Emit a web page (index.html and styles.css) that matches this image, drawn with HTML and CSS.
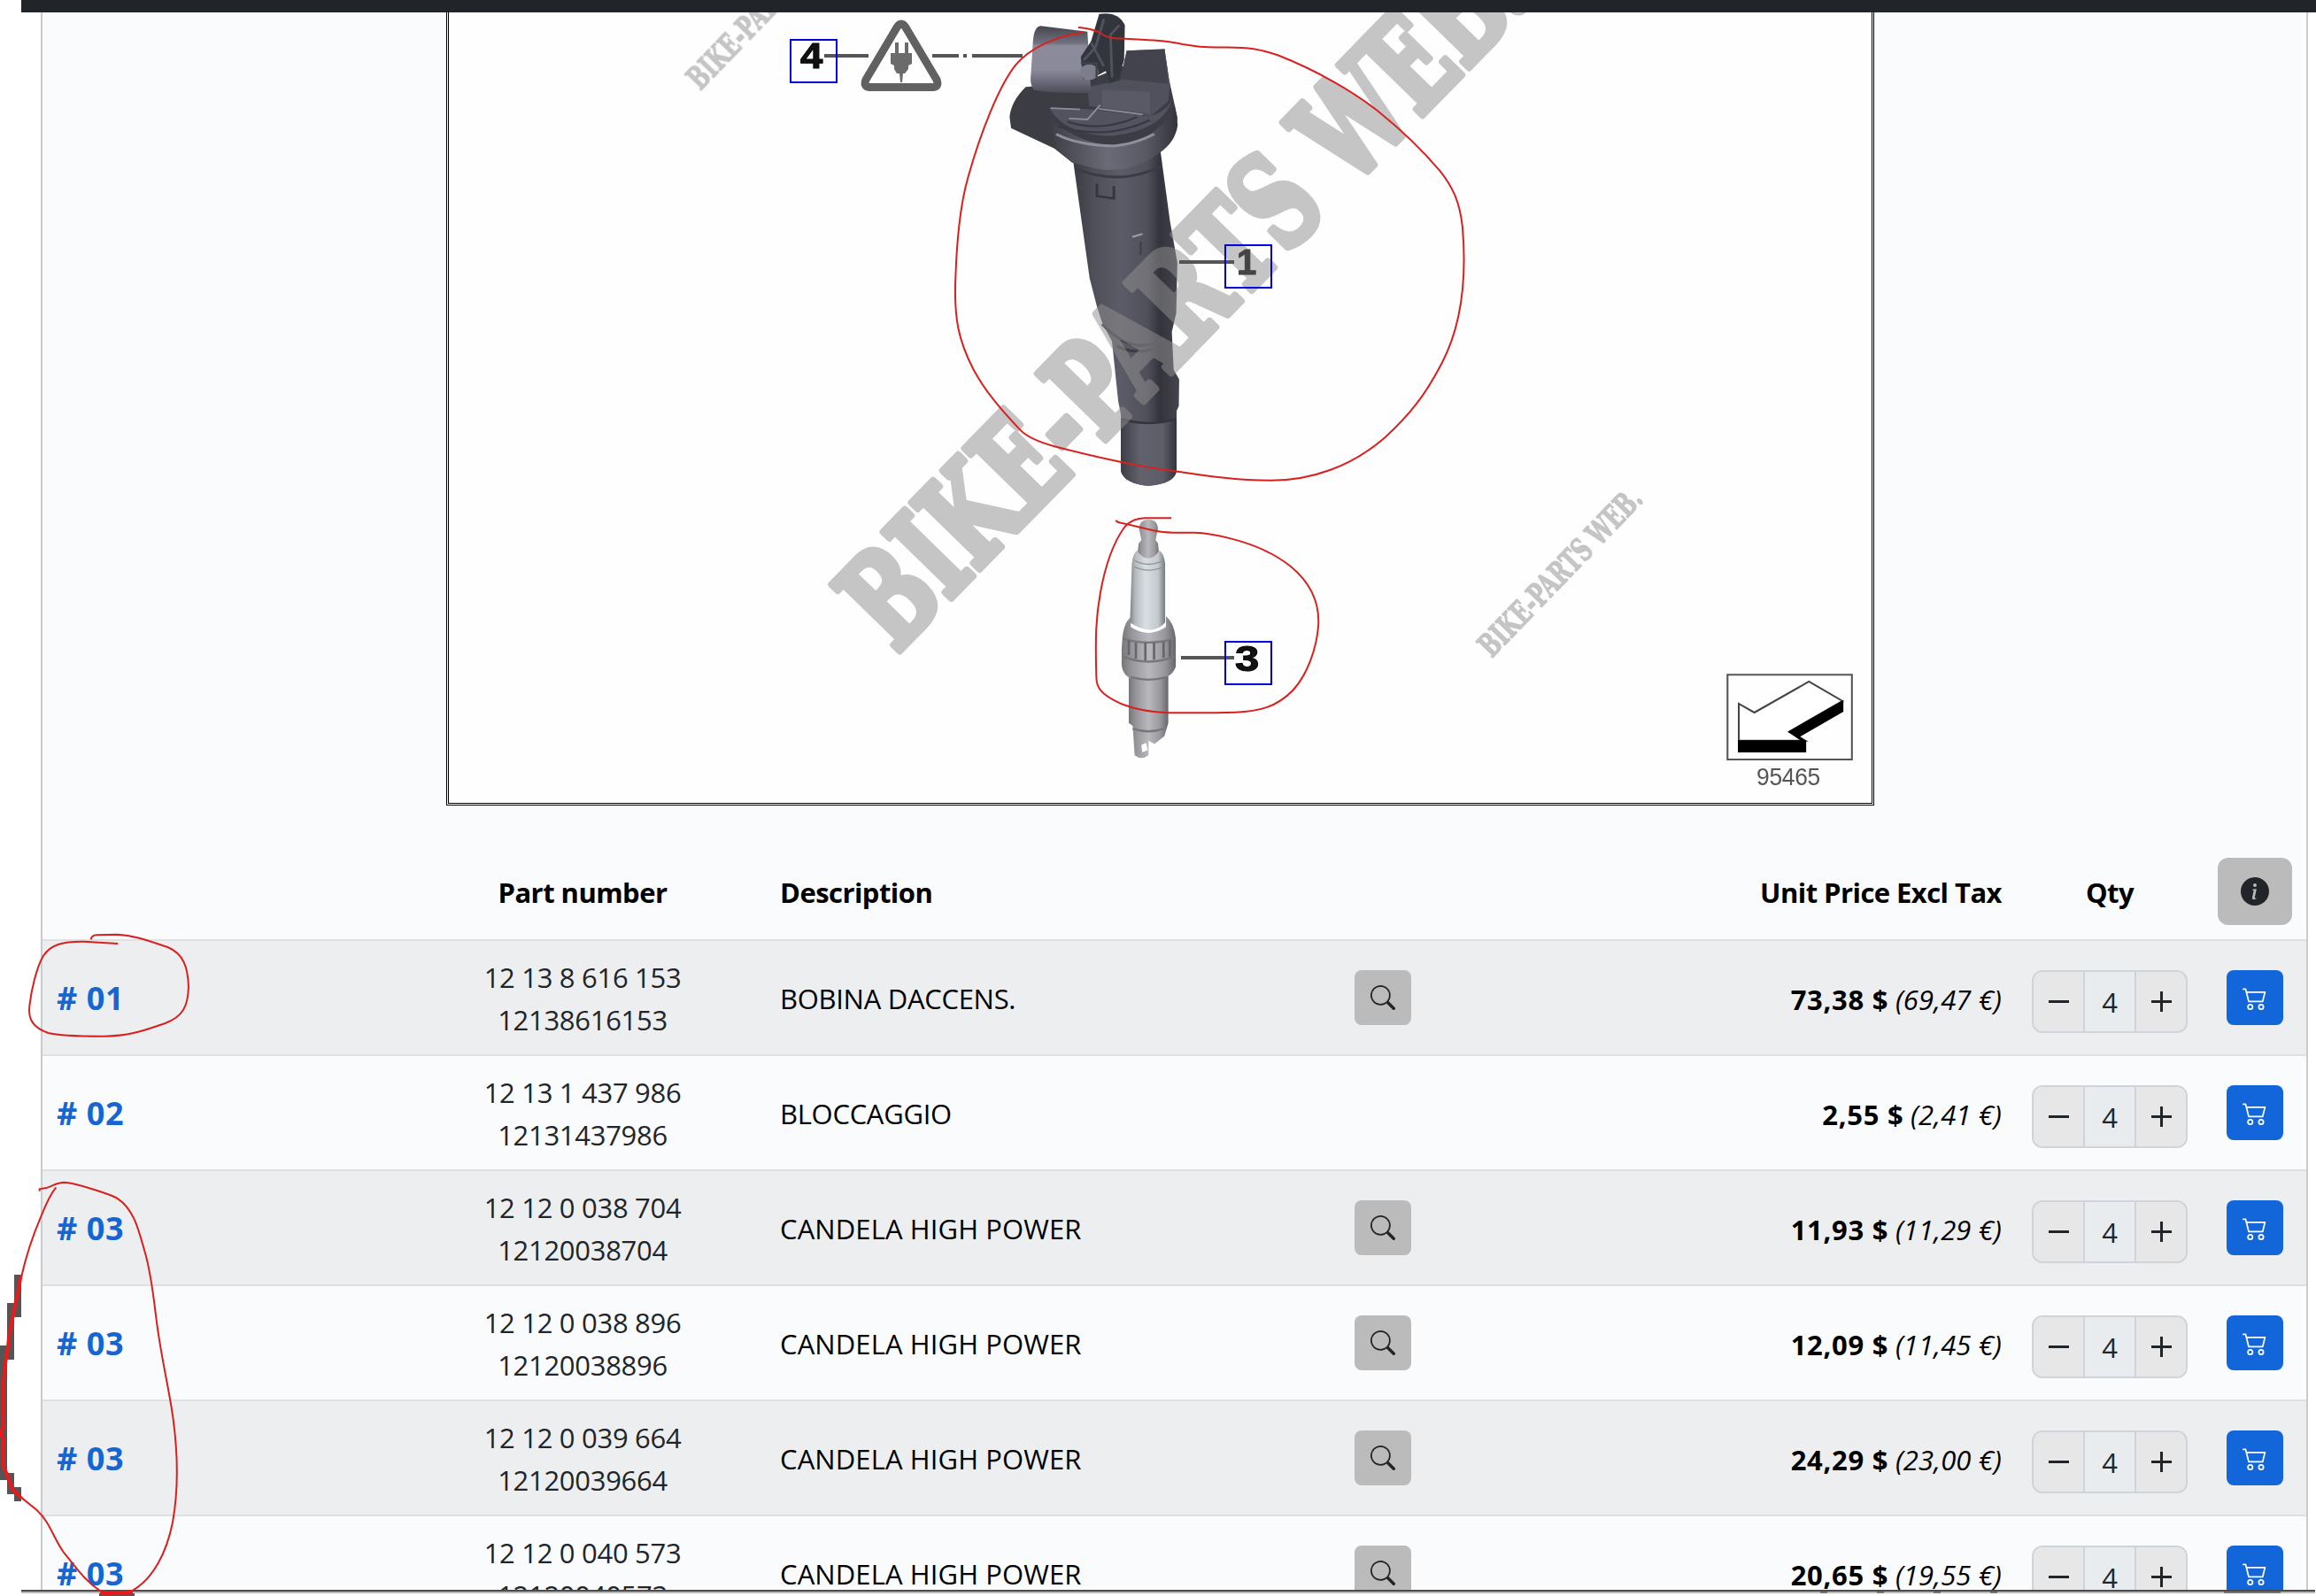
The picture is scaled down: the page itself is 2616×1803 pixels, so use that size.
FILE: index.html
```html
<!DOCTYPE html>
<html lang="it">
<head>
<meta charset="utf-8">
<title>Bike-Parts Web</title>
<link rel="stylesheet" href="styles.css">
</head>
<body>
<svg class="sprite" aria-hidden="true">
  <symbol id="search" viewBox="0 0 16 16"><path d="M11.742 10.344a6.5 6.5 0 1 0-1.397 1.398h-.001c.03.04.062.078.098.115l3.85 3.85a1 1 0 0 0 1.415-1.414l-3.85-3.85a1.007 1.007 0 0 0-.115-.1zM12 6.5a5.5 5.5 0 1 1-11 0 5.5 5.5 0 0 1 11 0z"/></symbol>
  <symbol id="cart" viewBox="0 0 16 16"><path d="M0 2.5A.5.5 0 0 1 .5 2H2a.5.5 0 0 1 .485.379L2.89 4H14.5a.5.5 0 0 1 .485.621l-1.5 6A.5.5 0 0 1 13 11H4a.5.5 0 0 1-.485-.379L1.61 3H.5a.5.5 0 0 1-.5-.5zM3.14 5l1.25 5h8.22l1.25-5H3.14zM5 13a1 1 0 1 0 0 2 1 1 0 0 0 0-2zm-2 1a2 2 0 1 1 4 0 2 2 0 0 1-4 0zm9-1a1 1 0 1 0 0 2 1 1 0 0 0 0-2zm-2 1a2 2 0 1 1 4 0 2 2 0 0 1-4 0z"/></symbol>
  <symbol id="info" viewBox="0 0 16 16"><path d="M8 16A8 8 0 1 0 8 0a8 8 0 0 0 0 16zm.93-9.412-1 4.705c-.07.34.029.533.304.533.194 0 .487-.07.686-.246l-.088.416c-.287.346-.92.598-1.465.598-.703 0-1.002-.422-.808-1.319l.738-3.468c.064-.293.006-.399-.287-.47l-.451-.081.082-.381 2.29-.287zM8 5.5a1 1 0 1 1 0-2 1 1 0 0 1 0 2z"/></symbol>
</svg>

<div class="topbar"></div>
<main class="panel">
  <figure class="diagram">
    <svg viewBox="507 14 1607 893">
      <defs>
        <linearGradient id="tube" x1="0" x2="1"><stop offset="0" stop-color="#3a3a42"/><stop offset=".2" stop-color="#4f4f59"/><stop offset=".45" stop-color="#5c5c68"/><stop offset=".7" stop-color="#50505b"/><stop offset=".82" stop-color="#33333c"/><stop offset="1" stop-color="#45454e"/></linearGradient>
        <linearGradient id="tip" x1="0" x2="1"><stop offset="0" stop-color="#3d3d46"/><stop offset=".35" stop-color="#62626e"/><stop offset=".75" stop-color="#5d5d68"/><stop offset="1" stop-color="#34343c"/></linearGradient>
        <linearGradient id="collar" x1="0" x2="1"><stop offset="0" stop-color="#3e3e47"/><stop offset=".45" stop-color="#6b6b77"/><stop offset=".75" stop-color="#595964"/><stop offset="1" stop-color="#33333b"/></linearGradient>
        <linearGradient id="socket" x1="0" y1="0" x2="0" y2="1"><stop offset="0" stop-color="#44454e"/><stop offset=".25" stop-color="#6f707e"/><stop offset=".3" stop-color="#8b8b9b"/><stop offset=".65" stop-color="#8a8a9c"/><stop offset="1" stop-color="#4c4c57"/></linearGradient>
        <linearGradient id="ceramic" x1="0" x2="1"><stop offset="0" stop-color="#7c8388"/><stop offset=".15" stop-color="#b4babf"/><stop offset=".45" stop-color="#dadfe4"/><stop offset=".8" stop-color="#c3c8cd"/><stop offset="1" stop-color="#73797d"/></linearGradient>
        <linearGradient id="steel" x1="0" x2="1"><stop offset="0" stop-color="#77777b"/><stop offset=".2" stop-color="#98989c"/><stop offset=".5" stop-color="#b9b9bd"/><stop offset=".8" stop-color="#98989c"/><stop offset="1" stop-color="#66666a"/></linearGradient>
      </defs>

      <!-- ignition coil -->
      <g transform="translate(1050 0) scale(.4146 .3571)">
        <path fill="url(#tube)" d="M390 500L628 470L655 700L675 830L672 990L660 1050L665 1170L680 1200L679 1285L673 1300V1490Q668 1530 598 1537Q530 1530 521 1490V1310L514 1270L497 1080L470 1020L456 970L436 880Z"/>
        <path fill="url(#tip)" d="M521 1325Q600 1350 673 1325V1490Q668 1530 598 1537Q530 1530 521 1490Z"/>
        <path fill="none" stroke="#34343c" stroke-width="7" d="M523 1325Q600 1352 672 1325"/>
        <path fill="none" stroke="#3b3b44" stroke-width="8" d="M470 1025Q560 1140 655 1060M510 1095Q560 1125 620 1100M400 535Q520 590 632 525"/>
        <path fill="#3c3c44" d="M218 370Q222 320 262 275L420 260L640 155L652 250L675 370Q678 430 628 480Q540 545 430 530L388 514L340 470L222 405Z"/>
        <path fill="url(#collar)" d="M330 380Q420 460 500 458Q620 450 668 335L676 395Q670 450 625 485Q540 560 430 528L388 514L345 470Z"/>
        <path fill="none" stroke="#8f909d" stroke-width="8" d="M345 424Q400 458 500 462Q560 455 612 424"/>
        <path fill="#52535e" d="M325 340L430 345L600 368Q650 350 662 310Q640 410 500 430Q370 430 325 340Z"/>
        <path fill="none" stroke="#373841" stroke-width="6" d="M350 400Q480 445 600 380M375 385Q470 420 565 370"/>
        <path fill="#50515c" d="M430 275L520 255L537 160L640 155L655 270L650 320L602 368L435 335Z"/>
        <path fill="#42434d" d="M537 160L640 156L650 265L520 250Z"/>
        <path fill="#595a66" d="M470 285L600 290V360L470 340Z"/>
        <path fill="none" stroke="#8c8e99" stroke-width="5" d="M380 375L430 378L465 332M460 344L580 362M330 342L410 346"/>
        <path fill="url(#socket)" d="M282 125Q286 84 302 82L430 100L440 295Q330 295 284 285Q272 265 276 235Z"/>
        <path fill="#33353d" d="M412 180L440 130L462 44Q515 35 532 80L530 190L515 250L492 264L480 225L455 240L418 250Z"/>
        <path fill="none" stroke="#50525d" stroke-width="7" d="M475 60L452 150L420 190M517 80L493 110L497 245M440 135L475 210"/>
        <circle cx="435" cy="228" r="25" fill="#7c7e8b"/><path fill="none" stroke="#42434c" stroke-width="6" d="M412 200H455V250"/>
        <path fill="none" stroke="#34353d" stroke-width="7" d="M456 582V620L502 628V588"/>
        <path fill="none" stroke="#9c9ca5" stroke-width="6" d="M552 750L580 740"/><path stroke="#41414b" stroke-width="6" d="M575 765V805"/>
      </g>

      <!-- spark plug -->
      <g transform="translate(900 420) scale(.4464 .3333)">
        <path fill="url(#steel)" d="M866 530Q868 500 890 500Q912 500 914 530L908 570L914 582L918 640H860L865 582L872 570Z"/>
        <path fill="url(#ceramic)" d="M860 605Q890 660 918 605Q930 620 932 650V850Q900 900 843 850L848 650Q850 620 860 605Z"/>
        <path fill="none" stroke="#90969a" stroke-width="4" d="M855 640Q890 665 926 640M853 660Q890 685 928 660"/>
        <path fill="url(#steel)" d="M840 1030H940V1190L930 1235L905 1262L890 1250V1300Q872 1318 855 1300L850 1200L840 1190Z"/>
        <path fill="url(#steel)" d="M822 940L824 900Q828 850 845 832V865Q890 905 934 865V828Q955 850 959 905V1000Q950 1030 930 1038Q890 1054 842 1038Q820 1020 822 980Z"/>
        <path fill="none" stroke="#77777b" stroke-width="7" d="M826 905Q890 930 956 905M826 965Q890 1000 956 965M845 1035Q890 1052 936 1035M850 1210Q890 1228 928 1210"/>
        <path stroke="#66666b" stroke-width="6" d="M840 910V960M858 918V972M882 918V978M904 918V976M928 915V970M944 910V965"/>
        <path fill="#fff" d="M872 1265L884 1258L888 1282L874 1290Z"/>
      </g>

      <!-- watermarks -->
      <g class="watermark">
        <text class="mark-large" transform="translate(1012 739) rotate(-45.7)" textLength="1004" lengthAdjust="spacingAndGlyphs">BIKE-PARTS WEB</text>
        <text class="mark-small" transform="translate(1685 744) rotate(-46)" textLength="248" lengthAdjust="spacingAndGlyphs">BIKE-PARTS WEB.</text>
        <text class="mark-small" transform="translate(791 103) rotate(-46)" textLength="248" lengthAdjust="spacingAndGlyphs">BIKE-PARTS WEB.</text>
        <circle cx="1715" cy="4" r="12" fill="none"/>
      </g>

      <!-- leader lines and plug warning sign -->
      <g fill="none" stroke="#555" stroke-width="4">
        <path d="M931 63H981M1053 63H1083M1088 63H1092M1098 63H1155M1332 296H1394M1334 743H1394"/>
        <path stroke="#616161" stroke-width="9" stroke-linejoin="round" d="M1013 31Q1018 23 1023 31L1058 90Q1061 98 1054 98.500H982Q975 98 978 90Z"/>
      </g>
      <path fill="#6b6b6b" d="M1011 48h4v12h7v-12h4v12h4v12l-4 2v4l-4 5h-2l-1 10h-2l-1-10h-3l-3-5v-4l-4-2v-12h5z"/>

      <g class="callout">
        <rect x="893" y="45" width="52" height="48"/><rect x="1384" y="277" width="52" height="48"/><rect x="1384" y="725" width="52" height="48"/>
        <text x="904" y="77" textLength="25" lengthAdjust="spacingAndGlyphs">4</text>
        <text x="1397" y="310" class="callout-one">1</text>
        <text x="1395" y="758" textLength="27" lengthAdjust="spacingAndGlyphs">3</text>
      </g>

      <!-- drawing reference -->
      <g transform="translate(1600 500) scale(.3444 .3333)">
        <path fill="none" stroke="#555" stroke-width="6" d="M1020 787H1428V1074H1020Z"/>
        <path fill="#fff" stroke="#444" stroke-width="6" d="M1057 1010V885L1108 915L1287 810L1397 876L1222 980L1275 1010Z"/>
        <path d="M1054 1009H1278V1050H1054ZM1400 873V912L1258 997L1278 1012H1262L1218 980Z"/>
      </g>
      <text x="1984" y="887" class="drawing-no" textLength="72" lengthAdjust="spacingAndGlyphs">95465</text>
    </svg>
  </figure>

  <section class="parts">
    <div class="row head">
      <span></span><b class="part">Part number</b><b class="desc">Description</b><span></span><b class="price">Unit Price Excl Tax</b><b class="qty">Qty</b>
      <div class="cell"><button class="btn info"><svg><use href="#info"/></svg></button></div>
    </div>
    <div class="row">
      <a class="ref"># 01</a><div class="part">12 13 8 616 153<br>12138616153</div><div class="desc">BOBINA DACCENS.</div>
      <div class="cell"><button class="btn"><svg><use href="#search"/></svg></button></div>
      <div class="price"><b>73,38 $</b> <i>(69,47 €)</i></div>
      <div class="stepper"><span class="minus"></span><span>4</span><span class="plus"></span></div>
      <div class="cell"><button class="btn buy"><svg><use href="#cart"/></svg></button></div>
    </div>
    <div class="row">
      <a class="ref"># 02</a><div class="part">12 13 1 437 986<br>12131437986</div><div class="desc">BLOCCAGGIO</div>
      <div class="cell"></div>
      <div class="price"><b>2,55 $</b> <i>(2,41 €)</i></div>
      <div class="stepper"><span class="minus"></span><span>4</span><span class="plus"></span></div>
      <div class="cell"><button class="btn buy"><svg><use href="#cart"/></svg></button></div>
    </div>
    <div class="row">
      <a class="ref"># 03</a><div class="part">12 12 0 038 704<br>12120038704</div><div class="desc wide">CANDELA HIGH POWER</div>
      <div class="cell"><button class="btn"><svg><use href="#search"/></svg></button></div>
      <div class="price"><b>11,93 $</b> <i>(11,29 €)</i></div>
      <div class="stepper"><span class="minus"></span><span>4</span><span class="plus"></span></div>
      <div class="cell"><button class="btn buy"><svg><use href="#cart"/></svg></button></div>
    </div>
    <div class="row">
      <a class="ref"># 03</a><div class="part">12 12 0 038 896<br>12120038896</div><div class="desc wide">CANDELA HIGH POWER</div>
      <div class="cell"><button class="btn"><svg><use href="#search"/></svg></button></div>
      <div class="price"><b>12,09 $</b> <i>(11,45 €)</i></div>
      <div class="stepper"><span class="minus"></span><span>4</span><span class="plus"></span></div>
      <div class="cell"><button class="btn buy"><svg><use href="#cart"/></svg></button></div>
    </div>
    <div class="row">
      <a class="ref"># 03</a><div class="part">12 12 0 039 664<br>12120039664</div><div class="desc wide">CANDELA HIGH POWER</div>
      <div class="cell"><button class="btn"><svg><use href="#search"/></svg></button></div>
      <div class="price"><b>24,29 $</b> <i>(23,00 €)</i></div>
      <div class="stepper"><span class="minus"></span><span>4</span><span class="plus"></span></div>
      <div class="cell"><button class="btn buy"><svg><use href="#cart"/></svg></button></div>
    </div>
    <div class="row">
      <a class="ref"># 03</a><div class="part">12 12 0 040 573<br>12120040573</div><div class="desc wide">CANDELA HIGH POWER</div>
      <div class="cell"><button class="btn"><svg><use href="#search"/></svg></button></div>
      <div class="price"><b>20,65 $</b> <i>(19,55 €)</i></div>
      <div class="stepper"><span class="minus"></span><span>4</span><span class="plus"></span></div>
      <div class="cell"><button class="btn buy"><svg><use href="#cart"/></svg></button></div>
    </div>
  </section>
</main>
<div class="bottom-edge"></div>

<!-- hand-drawn markup -->
<svg class="ink" viewBox="0 0 2616 1803">
  <path class="shade" d="M16 1440h8v48h-8zM8 1472h8v64h-8zM0 1520h8v152h-8zM8 1664h8v24h-8zM16 1680h8v16h-8zM112 1800h40v3h-40z"/>
  <path class="smudge" d="M2056 1798h8v2h-8zM2120 1798h8v2h-8zM2184 1798h8v2h-8zM2248 1798h8v2h-8zM2512 1798h64v2h-64z"/>
  <g transform="translate(1050 0) scale(.4146 .3571)"><path d="M405 87Q440 90 465 104Q478 118 505 121C590 125 640 128 690 140C740 150 760 150 800 150C870 149 900 155 950 175C1060 225 1160 295 1220 350C1300 425 1350 485 1390 540C1425 590 1445 640 1452 720C1465 900 1445 1040 1395 1150C1350 1250 1310 1310 1240 1385C1150 1475 1040 1520 930 1520C830 1520 740 1503 665 1490C560 1475 450 1445 340 1412Q270 1390 245 1358C190 1290 150 1235 120 1170C80 1080 65 1010 71 870C75 740 85 640 105 560C140 415 190 270 235 205C270 155 340 115 420 102"/></g>
  <g transform="translate(900 420) scale(.4464 .3333)"><path d="M807 503Q810 510 820 512C850 520 880 532 915 541C945 548 970 545 1005 545C1040 546 1070 555 1100 566C1170 590 1220 628 1250 660C1300 715 1322 780 1320 855C1316 940 1290 1030 1255 1080C1215 1135 1170 1152 1110 1154C1050 1157 990 1156 940 1156C880 1153 840 1140 805 1115C770 1090 758 1070 758 1035C755 900 757 830 768 750C780 660 800 580 830 525Q850 497 880 496H948"/></g>
  <g transform="translate(0 940) scale(.574 .3333)"><path d="M179 364Q180 350 190 349L230 347C265 350 295 370 330 390C360 412 370 455 371 525C370 590 360 625 325 648C280 675 250 693 200 692C150 692 115 690 95 681C65 662 55 635 58 590C62 530 72 460 85 420C100 380 125 370 165 371L232 378"/></g>
  <g transform="translate(0 1300) scale(.3333)"><path d="M134 137V130L160 125C180 118 195 107 218 107C245 109 280 119 310 129C355 144 380 150 400 163C455 200 470 270 490 340C520 440 525 560 540 640C555 740 575 820 587 910C603 1030 603 1160 585 1260C565 1360 520 1450 450 1490Q395 1500 340 1492C290 1460 260 1415 215 1360C180 1310 170 1260 125 1218L72 1175M72 430C85 370 110 290 140 220Q168 150 190 124"/>
  <path class="thick" d="M70 425L62 475L50 530L40 580L32 620L25 680L18 720L12 780L12 940L5 948V965L12 970V1070L25 1100L40 1145L72 1178M340 1496L360 1502L450 1496"/></g>
</svg>
</body>
</html>
```
FILE: styles.css
```css
* { box-sizing: border-box; }
body {
  margin: 0;
  height: 1803px;
  overflow: hidden;
  position: relative;
  background: #fff;
  color: #000;
  font: 31px/48px "Open Sans", "Noto Sans", sans-serif;
  letter-spacing: -.3px;
}
.sprite { display: none; }
.topbar { height: 14px; margin-left: 24px; background: #212529; }
.panel {
  width: 2561px;
  height: 1782px;
  margin-left: 46px;
  overflow: hidden;
  background: #f9fbfd;
  border: solid #c9cccf;
  border-width: 0 2px;
}
.bottom-edge {
  width: 2591px;
  height: 4px;
  margin-left: 24px;
  background: #b9b9b9;
  border-top: 2px solid #4b4b4d;
}

.diagram {
  width: 1613px;
  height: 896px;
  margin: 0 0 43px 456px;
  background: #fefefe;
  border: 3px double #000;
  border-top: 0;
}
.diagram svg { display: block; width: 1607px; height: 893px; }
.watermark {
  opacity: .52;
  fill: #8f8f8f;
  stroke: #8f8f8f;
  stroke-width: 3;
  stroke-linejoin: round;
  font-family: "DejaVu Serif", serif;
  font-weight: bold;
  letter-spacing: 0;
}
.mark-large { font-size: 146px; stroke-width: 9; }
.mark-small { font-size: 36px; stroke-width: 1.5; }
.callout { fill: #111; font: bold 40px "Liberation Sans", sans-serif; }
.callout rect { fill: none; stroke: #0000dc; stroke-width: 2; }
.callout text { stroke: currentColor; stroke-width: 1; }
.callout .callout-one { fill: #444; stroke: #444; }
.drawing-no { fill: #555; font: 27px "Liberation Sans", sans-serif; }

.row {
  display: grid;
  grid-template-columns: 450px 320px 684px 120px 653px 216px 112px;
  align-items: center;
  height: 130px;
  border-bottom: 2px solid #dee0e2;
}
.row.head { height: 110px; letter-spacing: -.55px; }
.row:nth-child(even) { background: #edeeef; }
.ref { padding: 2px 0 0 16px; color: #1565d3; font-size: 36px; font-weight: 700; letter-spacing: .6px; }
.part { padding-top: 2px; text-align: center; color: #212529; }
.head .part { color: #000; }
.desc { padding: 1px 0 0 63px; }
.desc.wide { letter-spacing: .1px; }
.price { padding: 4px 14px 0 0; text-align: right; }
.price b { letter-spacing: .7px; }
.price i { letter-spacing: .15px; }
.head .price { padding-top: 2px; }
.qty { padding-top: 2px; text-align: center; }
.cell { display: flex; justify-content: center; }
.btn {
  display: flex;
  align-items: center;
  justify-content: center;
  width: 64px;
  height: 62px;
  padding: 0;
  border: 0;
  border-radius: 8px;
  background: #bbb;
  color: #212529;
}
.btn svg { width: 28px; height: 28px; fill: currentColor; }
.btn.info { width: 84px; height: 76px; border-radius: 12px; }
.btn.info svg { width: 32px; height: 32px; }
.btn.buy { background: #1266d9; color: #fff; }

.stepper {
  display: grid;
  grid-template-columns: 58px 1fr 58px;
  justify-self: center;
  width: 176px;
  height: 71px;
  margin-top: 8px;
  overflow: hidden;
  border: 2px solid #ced4da;
  border-radius: 12px;
  background: #e9ecef;
  color: #212529;
}
.stepper span { display: flex; align-items: center; justify-content: center; padding-top: 1px; }
.minus, .plus { background: #e7e7e7; }
.minus { border-right: 2px solid #ced4da; }
.plus { border-left: 2px solid #ced4da; }
.minus::before, .plus::before {
  content: "";
  width: 23px;
  height: 23px;
  background: linear-gradient(#212529, #212529) center / 23px 3px no-repeat;
}
.plus::before {
  background: linear-gradient(#212529, #212529) center / 23px 3px no-repeat,
    linear-gradient(#212529, #212529) center / 3px 23px no-repeat;
}

.ink { position: absolute; inset: 0; width: 2616px; height: 1803px; pointer-events: none; }
.ink path { fill: none; stroke: #d8201f; stroke-width: 2; vector-effect: non-scaling-stroke; }
.ink .thick { stroke: #ea1a1a; stroke-width: 4; }
.ink .shade { fill: #555; stroke: none; }
.ink .smudge { fill: #777; stroke: none; }
```
